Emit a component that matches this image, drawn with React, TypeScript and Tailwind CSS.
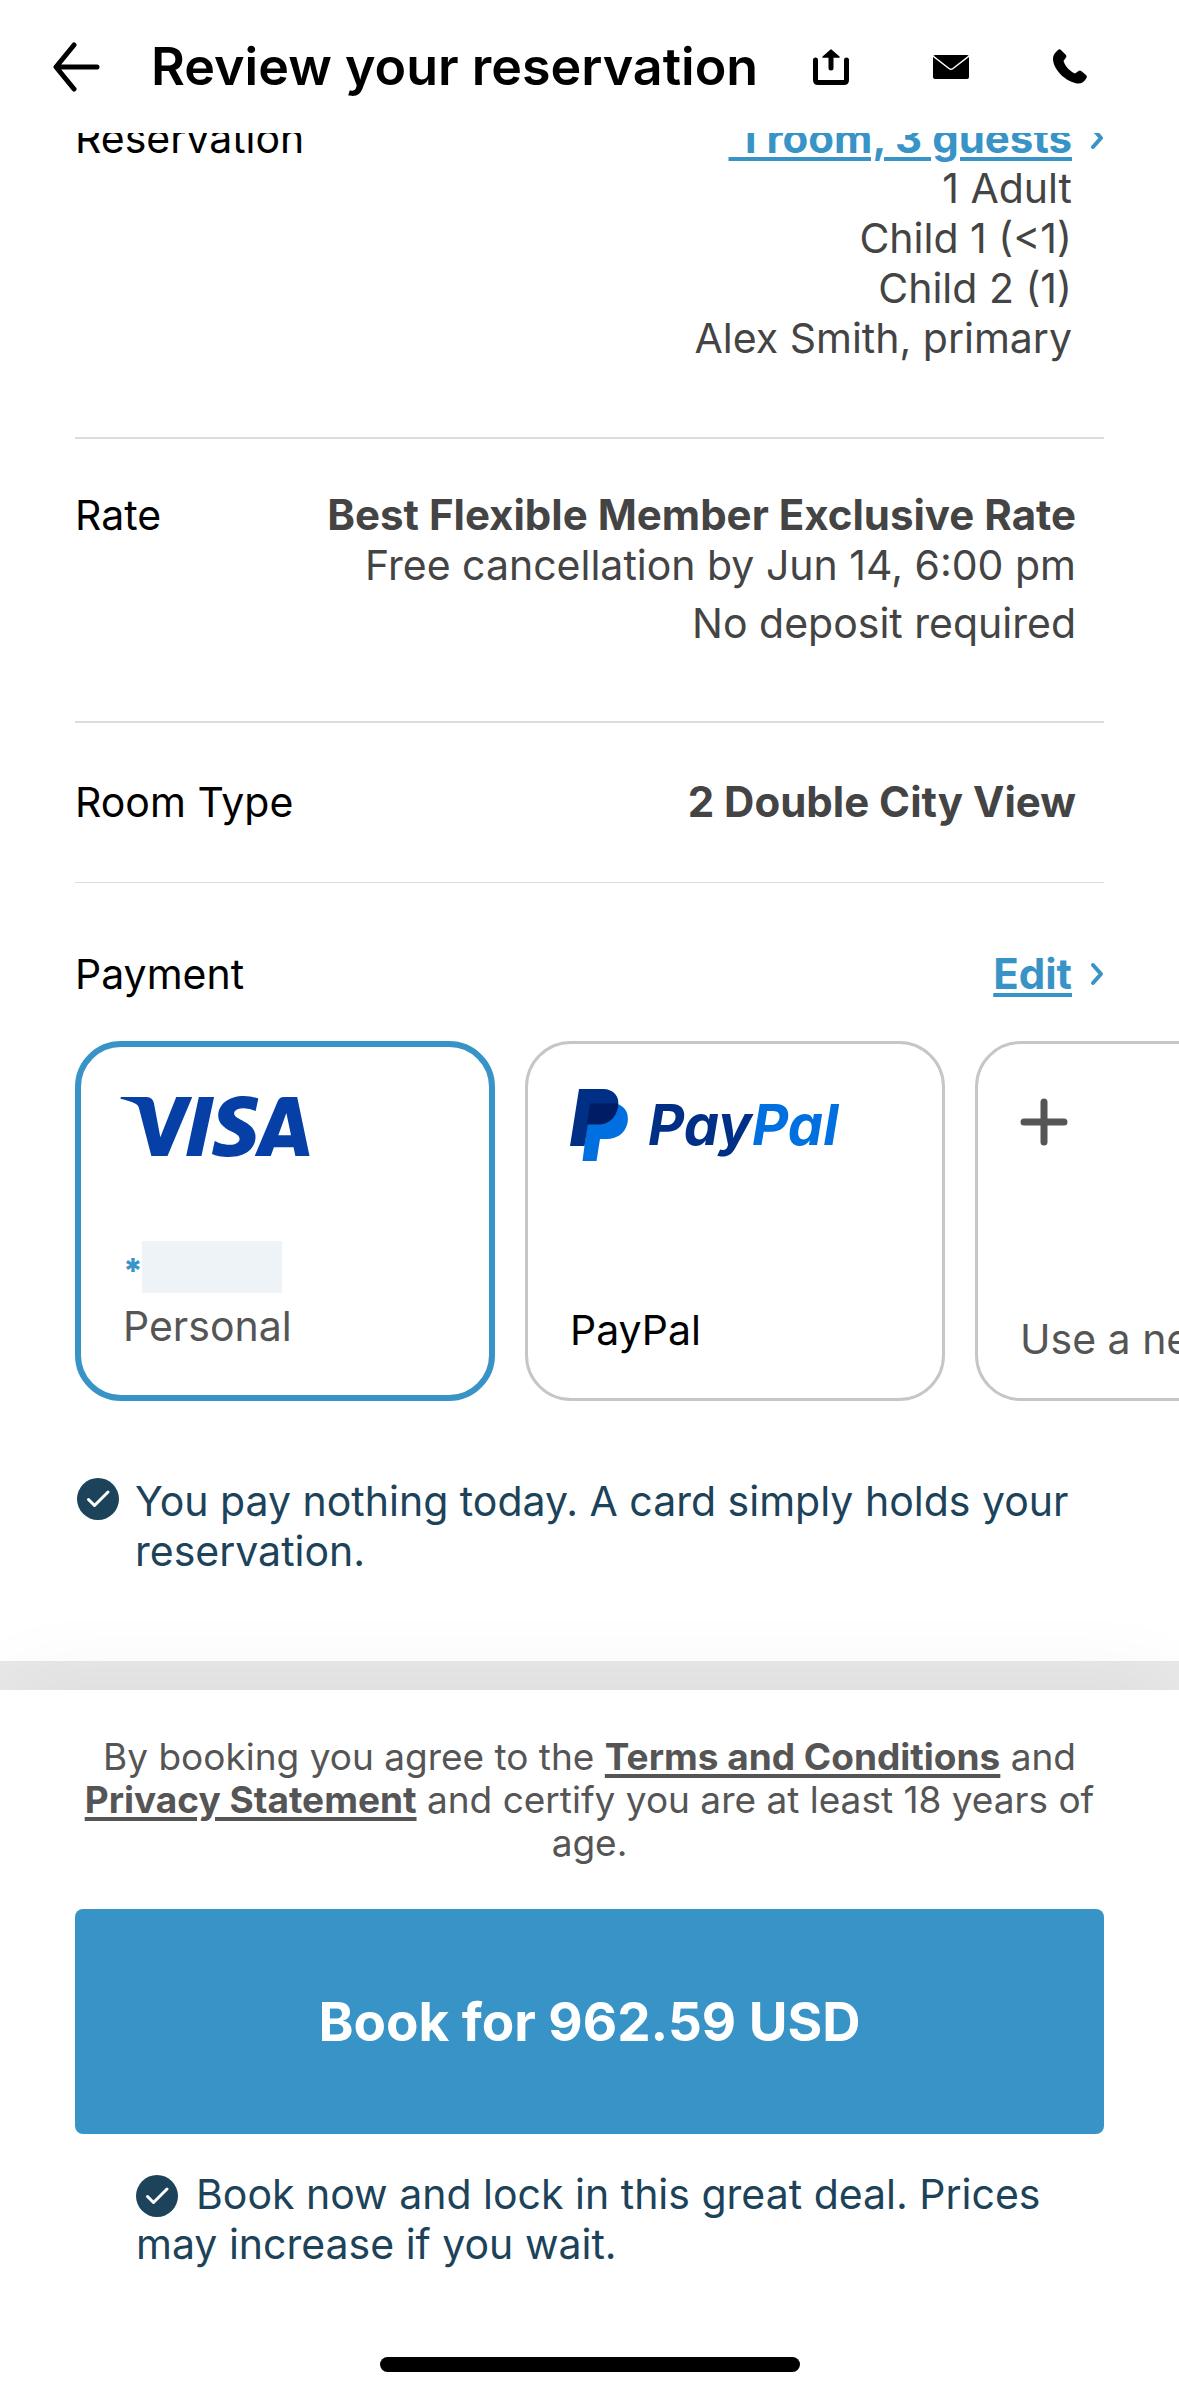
import { useState } from 'react';
import type { ReactNode } from 'react';
import { SiVisa } from 'react-icons/si';

type Method = 'visa' | 'paypal' | 'new';

// ── Icons ───────────────────────────────────────────────────
const BackIcon = () => (
  <svg width="48" height="50" viewBox="0 0 48 50" fill="none" stroke="#000" strokeWidth="5" strokeLinecap="round" strokeLinejoin="round">
    <path d="M21 3L3 25l18 22M4 25h40" />
  </svg>
);

const ShareIcon = () => (
  <svg width="36" height="36" viewBox="0 0 36 36">
    <path d="M2.5 11v20q0 2.500 2.500 2.500h26q2.500 0 2.500-2.500V11" fill="none" stroke="#000" strokeWidth="5" strokeLinecap="round" />
    <path d="M18 8v11" stroke="#000" strokeWidth="5" strokeLinecap="round" />
    <path d="M18 1l8 7H10z" stroke="#000" strokeWidth="1.500" strokeLinejoin="round" />
  </svg>
);

const MailIcon = () => (
  <svg width="36" height="36" viewBox="0 0 36 36">
    <rect y="6" width="36" height="24" rx="2" />
    <path d="M0 7l16 12.500q2 1.500 4 0L36 7" fill="none" stroke="#fff" strokeWidth="1.500" />
  </svg>
);

const PhoneIcon = () => (
  <svg width="36" height="36" viewBox="0 0 36 36">
    <path d="M5 1Q6.500-.5 8 1l4.500 4.500q1.500 1.500.5 3l-2.500 3.500c1.500 5 6 10 11.500 12.500l3.500-2.500q1.500-1 3 .3l4.500 3.700q1.500 1.500.5 3C30.500 34 27 35.500 22 34 11 31 0 20 0 9.500 0 6 2 3.500 5 1z" />
  </svg>
);

const Chevron = () => (
  <svg width="14" height="24" viewBox="0 0 14 24" aria-hidden="true">
    <path d="M3 3l8 9-8 9" fill="none" stroke="#3894c6" strokeWidth="4" strokeLinecap="round" strokeLinejoin="round" />
  </svg>
);

const CheckBadge = ({ className }: { className: string }) => (
  <svg className={className} width="42" height="42" viewBox="0 0 42 42" aria-hidden="true">
    <circle cx="21" cy="21" r="21" fill="#1c4359" />
    <path d="M11.500 21.500l6 6L31 14" fill="none" stroke="#fff" strokeWidth="3" strokeLinecap="round" strokeLinejoin="round" />
  </svg>
);

const PlusIcon = () => (
  <svg width="48" height="48" viewBox="0 0 48 48" stroke="#555" strokeWidth="7" strokeLinecap="round">
    <path d="M24 4v40M4 24h40" />
  </svg>
);

const PayPalLogo = () => (
  <span className="flex items-center gap-5" aria-hidden="true">
    <svg width="58" height="72" viewBox="0 0 58 72">
      <path fill="#0070e0" d="M20 15h27.500C56 18 59 25 57.500 34 55 45 46 50 37 50h-7l-3.500 22h-14z" />
      <path fill="#002f86" d="M9 0h24c11 0 17 8 15 17-2 12-10 18-20 18H18l-3.500 22H0z" />
      <path fill="#001c64" d="M20 14.500h28q.5 1 0 3c-2 12-10 18-20 18H17z" />
    </svg>
    <span className="text-[56px] font-bold italic leading-[72px] text-[#002f86] [font-feature-settings:'cv11']">
      Pay<span className="text-[#0070e0]">Pal</span>
    </span>
  </span>
);

// ── Pieces ──────────────────────────────────────────────────
const Row = ({ label, className, children }: { label: string; className: string; children: ReactNode }) => (
  <div className={`flex justify-between ${className}`}>
    <dt className="text-black">{label}</dt>
    <dd className="text-right">{children}</dd>
  </div>
);

const ActionLink = ({ href, children }: { href: string; children: ReactNode }) => (
  <a href={href} className="flex items-center justify-end gap-[18px] text-[42px] font-bold leading-[50px] text-[#3894c6]">
    <span className="underline decoration-4 underline-offset-4">{children}</span>
    <Chevron />
  </a>
);

const PayCard = ({ label, selected, onSelect, className, children }: {
  label: string; selected: boolean; onSelect: () => void; className: string; children: ReactNode;
}) => (
  <button
    aria-label={label}
    aria-pressed={selected}
    onClick={onSelect}
    className={`flex h-[360px] w-[420px] shrink-0 flex-col items-start justify-between rounded-[46px] text-left ${
      selected ? 'border-[6px] border-[#3894c6] pl-[39px]' : 'border-[3px] border-[#c4c6c8] pl-[42px]'
    } ${className}`}
  >
    {children}
  </button>
);

export default function App() {
  const [method, setMethod] = useState<Method>('visa');

  return (
    <div className="flex min-h-screen flex-col bg-[#e8e8e8] font-['Inter',sans-serif] text-[41px] leading-[50px] text-[#444]">
      <header className="relative z-10 flex h-[133px] items-center justify-between bg-white pl-[53px] pr-[90px]">
        <div className="flex items-center gap-[50px]">
          <button aria-label="Back"><BackIcon /></button>
          <h1 className="text-[52px] font-semibold text-black">Review your reservation</h1>
        </div>
        <div className="flex items-center gap-[84px]">
          <button aria-label="Share"><ShareIcon /></button>
          <button aria-label="Email"><MailIcon /></button>
          <button aria-label="Call"><PhoneIcon /></button>
        </div>
      </header>

      <main className="overflow-hidden bg-white px-[75px] pb-[85px]">
        {/* First row is scrolled partly under the header */}
        <dl className="-mt-5">
          <Row label="Reservation" className="border-b-2 border-[#dcdcdc] pb-[74px]">
            <ActionLink href="#guests">&nbsp;1 room, 3 guests</ActionLink>
            <div className="pr-8">
              <p>1 Adult</p>
              <p>Child 1 (&lt;1)</p>
              <p>Child 2 (1)</p>
              <p>Alex Smith, primary</p>
            </div>
          </Row>
          <Row label="Rate" className="border-b-2 border-[#dcdcdc] pb-[73px] pr-7 pt-[51px]">
            <p className="text-[42px] font-bold">Best Flexible Member Exclusive Rate</p>
            <p className="mb-2">Free cancellation by Jun 14, 6:00 pm</p>
            <p>No deposit required</p>
          </Row>
          <Row label="Room Type" className="border-b border-[#dcdcdc] pb-[55px] pr-7 pt-[54px]">
            <p className="text-[42px] font-bold">2 Double City View</p>
          </Row>
        </dl>

        {/* Payment */}
        <section>
          <div className="mb-[42px] mt-[66px] flex justify-between">
            <h2 className="text-black">Payment</h2>
            <ActionLink href="#payment">Edit</ActionLink>
          </div>
          <div className="-mr-[75px] flex gap-[30px] overflow-x-auto [scrollbar-width:none]">
            <PayCard label="Visa, Personal" selected={method === 'visa'} onSelect={() => setMethod('visa')} className="pb-[44px] pt-[48px]">
              <SiVisa viewBox="0 8 24 8" className="h-[63px] w-[190px] text-[#0640a6]" />
              <span className="flex flex-col gap-[8px] pl-[3px] text-[#555]">
                <span className="flex h-[52px] items-center">
                  <span className="w-[19px] pt-2 text-[34px] font-extrabold text-[#3894c6]">*</span>
                  <span className="h-[52px] w-[140px] bg-[#eef3f8]" />
                </span>
                <span>Personal</span>
              </span>
            </PayCard>
            <PayCard label="PayPal" selected={method === 'paypal'} onSelect={() => setMethod('paypal')} className="pb-[43px] pt-[45px]">
              <PayPalLogo />
              <span className="text-black">PayPal</span>
            </PayCard>
            <PayCard label="Use a new card" selected={method === 'new'} onSelect={() => setMethod('new')} className="pb-[34px] pt-[54px]">
              <PlusIcon />
              <span className="text-[#555]">Use a new card</span>
            </PayCard>
          </div>
          <p className="mt-[75px] flex gap-4 text-[#1c4359]">
            <CheckBadge className="ml-0.5 mt-0.5 shrink-0" />
            <span>You pay nothing today. A card simply holds your reservation.</span>
          </p>
        </section>
      </main>

      <footer className="relative mt-[29px] flex grow flex-col bg-white px-[75px] pb-6 pt-[45px] shadow-[0_-20px_80px_-10px_rgba(0,0,0,0.05)]">
        <p className="text-center text-[37px] leading-[43px] text-[#555]">
          By booking you agree to the{' '}
          <a href="#terms" className="font-bold underline decoration-4 underline-offset-4">Terms and Conditions</a>
          {' '}and{' '}
          <a href="#privacy" className="font-bold underline decoration-4 underline-offset-4">Privacy Statement</a>
          {' '}and certify you are at least 18 years of age.
        </p>
        <button className="mt-[45px] h-[225px] rounded-lg bg-[#3894c6] text-[53px] font-bold text-white">
          Book for 962.59 USD
        </button>
        <p className="mt-[35px] px-[61px] text-[#1c4359]">
          <CheckBadge className="mr-[18px] inline-block align-[-8px]" />
          Book now and lock in this great deal. Prices may increase if you wait.
        </p>
        <div className="mx-auto mt-auto h-[15px] w-[420px] rounded-full bg-black" />
      </footer>
    </div>
  );
}
